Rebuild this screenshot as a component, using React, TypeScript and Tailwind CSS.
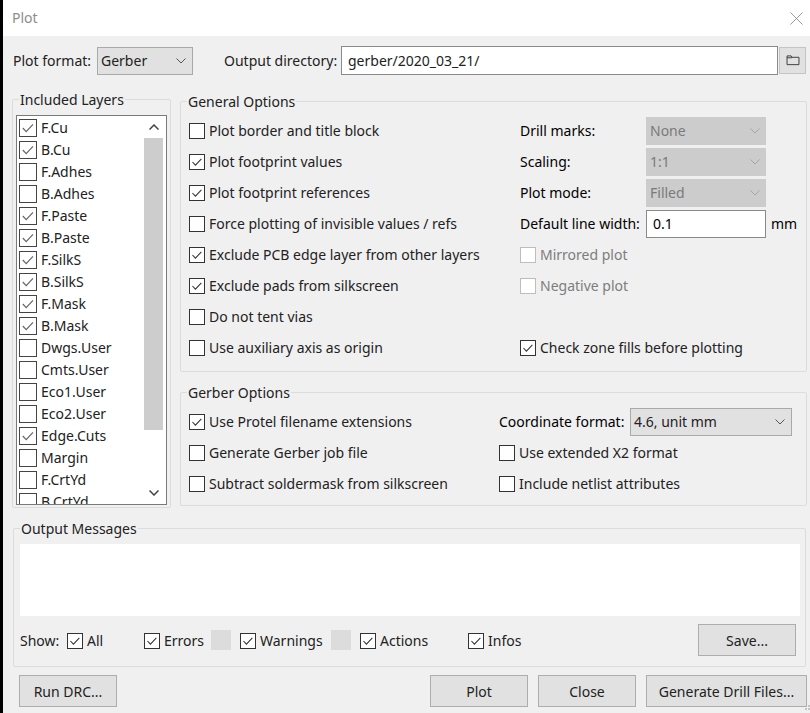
import React from "react";

const font = "font-['Noto_Sans','Open_Sans',sans-serif]";

function Tick({ muted = false }: { muted?: boolean }) {
  return (
    <svg viewBox="0 0 16 16" className="h-full w-full" fill="none">
      <path d="M2.8 8 L6.2 11.6 L13 4.4" stroke={muted ? "#666" : "#333"} strokeWidth="1.2" />
    </svg>
  );
}

function Check({ label, checked = false, disabled = false }: { label: string; checked?: boolean; disabled?: boolean }) {
  return (
    <div className={`flex items-center gap-1 ${disabled ? "text-[#7d7d7d]" : "text-[#222]"}`}>
      <span className={`block h-4 w-4 shrink-0 border bg-white ${disabled ? "border-[#bdbdbd] bg-[#ececec]" : "border-[#333]"}`}>
        {checked && <Tick />}
      </span>
      <span className="whitespace-nowrap">{label}</span>
    </div>
  );
}

function Chevron({ color = "#555", width = 1 }: { color?: string; width?: number }) {
  return (
    <svg viewBox="0 0 10 6" className="h-[6px] w-[10px]" fill="none">
      <path d="M0.5 0.5 L5 5 L9.5 0.5" stroke={color} strokeWidth={width} />
    </svg>
  );
}

function Select({ value, className, disabled = false }: { value: string; className: string; disabled?: boolean }) {
  return (
    <div
      className={`flex items-center justify-between pr-[6px] ${
        disabled ? "bg-[#cccccc] pl-[4px] text-[#7a7a7a]" : "border border-[#a9a9a9] bg-[#e1e1e1] pl-[3px] text-[#222]"
      } ${className}`}
    >
      <span>{value}</span>
      <Chevron color={disabled ? "#a5a5a5" : "#555"} />
    </div>
  );
}

function Button({ label, className }: { label: string; className: string }) {
  return (
    <div className={`flex h-8 items-center justify-center border border-[#adadad] bg-[#e1e1e1] pt-[1px] text-[#222] ${className}`}>
      {label}
    </div>
  );
}

function Group({ title, className, children }: { title: string; className: string; children: React.ReactNode }) {
  return (
    <div className={`relative rounded-[2px] border border-[#dcdcdc] ${className}`}>
      <span className="absolute -top-[10px] left-[6px] bg-[#f0f0f0] px-[1px] leading-5 text-[#222]">{title}</span>
      {children}
    </div>
  );
}

const layers: [string, boolean][] = [
  ["F.Cu", true],
  ["B.Cu", true],
  ["F.Adhes", false],
  ["B.Adhes", false],
  ["F.Paste", true],
  ["B.Paste", true],
  ["F.SilkS", true],
  ["B.SilkS", true],
  ["F.Mask", true],
  ["B.Mask", true],
  ["Dwgs.User", false],
  ["Cmts.User", false],
  ["Eco1.User", false],
  ["Eco2.User", false],
  ["Edge.Cuts", true],
  ["Margin", false],
  ["F.CrtYd", false],
  ["B.CrtYd", false],
];

export default function App() {
  return (
    <div className={`relative flex h-[713px] w-[810px] flex-col overflow-hidden border-l-[3px] border-black bg-[#f0f0f0] text-[14px] leading-5 ${font}`}>
      <div className="flex h-[36px] shrink-0 items-center justify-between bg-white pl-[9px] pr-[7px]">
        <span className="text-[#8d8d8d]">Plot</span>
        <svg viewBox="0 0 14 14" className="h-[13px] w-[13px]" fill="none">
          <path d="M0.5 0.5 L13.5 13.5 M13.5 0.5 L0.5 13.5" stroke="#777" strokeWidth="0.8" />
        </svg>
      </div>

      <div className="mt-[10px] flex h-[29px] shrink-0 items-center pl-[10px] pr-[4px] text-[#222]">
        <span className="w-[84px] whitespace-nowrap">Plot format:</span>
        <Select value="Gerber" className="h-7 w-[96px]" />
        <span className="ml-[31px] w-[117px] whitespace-nowrap">Output directory:</span>
        <div className="flex h-[29px] w-[437px] items-center border border-[#8a8a8a] bg-white pl-[6px]">gerber/2020_03_21/</div>
        <div className="ml-[1px] flex h-[27px] w-[27px] items-center justify-center border border-[#c4c4c4] bg-[#e1e1e1]">
          <svg viewBox="0 0 14 12" className="h-[11px] w-[14px]" fill="none">
            <path d="M0.5 10.5 V1 H5 L6 2.5 H13.5 V10.5 Z M0.5 3 H6" stroke="#333" strokeWidth="1" />
          </svg>
        </div>
      </div>

      <div className="mt-[24px] flex shrink-0 pl-[9px]">
        <Group title="Included Layers" className="h-[409px] w-[159px] p-[3px] pt-[15px]">
          <div className="flex h-[390px] w-[151px] border border-[#7a7a7a] bg-white">
            <div className="h-full w-[127px] overflow-hidden pl-[2px] pt-[1px]">
              {layers.map(([name, on]) => (
                <div key={name} className="flex h-[22px] items-center gap-1 text-[#222]">
                  <span className="block h-[18px] w-[18px] shrink-0 border border-[#444] bg-white">{on && <Tick muted />}</span>
                  <span>{name}</span>
                </div>
              ))}
            </div>
            <div className="flex h-full w-[19px] flex-col items-center">
              <div className="flex h-[22px] shrink-0 items-center justify-center">
                <span className="rotate-180"><Chevron color="#444" width={1.5} /></span>
              </div>
              <div className="h-[292px] w-full bg-[#cdcdcd]" />
              <div className="flex flex-1 items-end justify-center pb-[8px]">
                <Chevron color="#444" width={1.5} />
              </div>
            </div>
          </div>
        </Group>

        <div className="ml-[9px] flex w-[627px] flex-col">
          <Group title="General Options" className="mt-[2px] h-[271px] w-full pl-[8px] pt-[13px]">
            <div className="grid grid-cols-[331px_1fr] grid-rows-[repeat(8,31px)] items-center">
              <Check label="Plot border and title block" />
              <div className="flex items-center">
                <span className="w-[126px]">Drill marks:</span>
                <Select disabled value="None" className="h-7 w-[120px]" />
              </div>
              <Check checked label="Plot footprint values" />
              <div className="flex items-center">
                <span className="w-[126px]">Scaling:</span>
                <Select disabled value="1:1" className="h-7 w-[120px]" />
              </div>
              <Check checked label="Plot footprint references" />
              <div className="flex items-center">
                <span className="w-[126px]">Plot mode:</span>
                <Select disabled value="Filled" className="h-7 w-[120px]" />
              </div>
              <Check label="Force plotting of invisible values / refs" />
              <div className="flex items-center">
                <span className="w-[126px] whitespace-nowrap">Default line width:</span>
                <div className="flex h-7 w-[120px] items-center border border-[#8a8a8a] bg-white pl-[6px]">0.1</div>
                <span className="ml-[5px]">mm</span>
              </div>
              <Check checked label="Exclude PCB edge layer from other layers" />
              <Check disabled label="Mirrored plot" />
              <Check checked label="Exclude pads from silkscreen" />
              <Check disabled label="Negative plot" />
              <Check label="Do not tent vias" />
              <div />
              <Check label="Use auxiliary axis as origin" />
              <Check checked label="Check zone fills before plotting" />
            </div>
          </Group>

          <Group title="Gerber Options" className="mt-[20px] h-[114px] w-full pl-[8px] pt-[13px]">
            <div className="grid grid-cols-[310px_1fr] grid-rows-[repeat(3,31px)] items-center">
              <Check checked label="Use Protel filename extensions" />
              <div className="flex items-center">
                <span className="w-[131px] whitespace-nowrap">Coordinate format:</span>
                <Select value="4.6, unit mm" className="h-7 w-[162px]" />
              </div>
              <Check label="Generate Gerber job file" />
              <Check label="Use extended X2 format" />
              <Check label="Subtract soldermask from silkscreen" />
              <Check label="Include netlist attributes" />
            </div>
          </Group>
        </div>
      </div>

      <Group title="Output Messages" className="ml-[10px] mt-[20px] h-[139px] w-[793px] shrink-0 pl-[6px] pt-[15px]">
        <div className="h-[72px] w-[780px] bg-white" />
        <div className="mt-[8px] flex h-8 items-center pr-[9px]">
          <span className="w-[47px] pt-[1px] text-[#222]">Show:</span>
          <div className="w-[77px] pt-[1px]"><Check checked label="All" /></div>
          <div className="w-[67px] pt-[1px]"><Check checked label="Errors" /></div>
          <div className="h-5 w-5 bg-[#dcdcdc]" />
          <div className="ml-[9px] w-[91px] pt-[1px]"><Check checked label="Warnings" /></div>
          <div className="h-5 w-5 bg-[#dcdcdc]" />
          <div className="ml-[9px] w-[108px] pt-[1px]"><Check checked label="Actions" /></div>
          <div className="pt-[1px]"><Check checked label="Infos" /></div>
          <Button label="Save..." className="ml-auto w-[98px]" />
        </div>
      </Group>

      <div className="mt-[8px] flex shrink-0 pl-[16px]">
        <Button label="Run DRC..." className="w-[98px]" />
        <Button label="Plot" className="ml-[313px] w-[98px]" />
        <Button label="Close" className="ml-[10px] w-[98px]" />
        <Button label="Generate Drill Files..." className="ml-[10px] w-[161px]" />
      </div>

      <svg viewBox="0 0 5 8" className="absolute bottom-0 right-0 h-2 w-[5px]">
        <rect x="3" y="0" width="2" height="2" fill="#c4c4c4" />
        <rect x="0" y="3" width="2" height="2" fill="#c4c4c4" />
        <rect x="3" y="3" width="2" height="2" fill="#c4c4c4" />
      </svg>
    </div>
  );
}
